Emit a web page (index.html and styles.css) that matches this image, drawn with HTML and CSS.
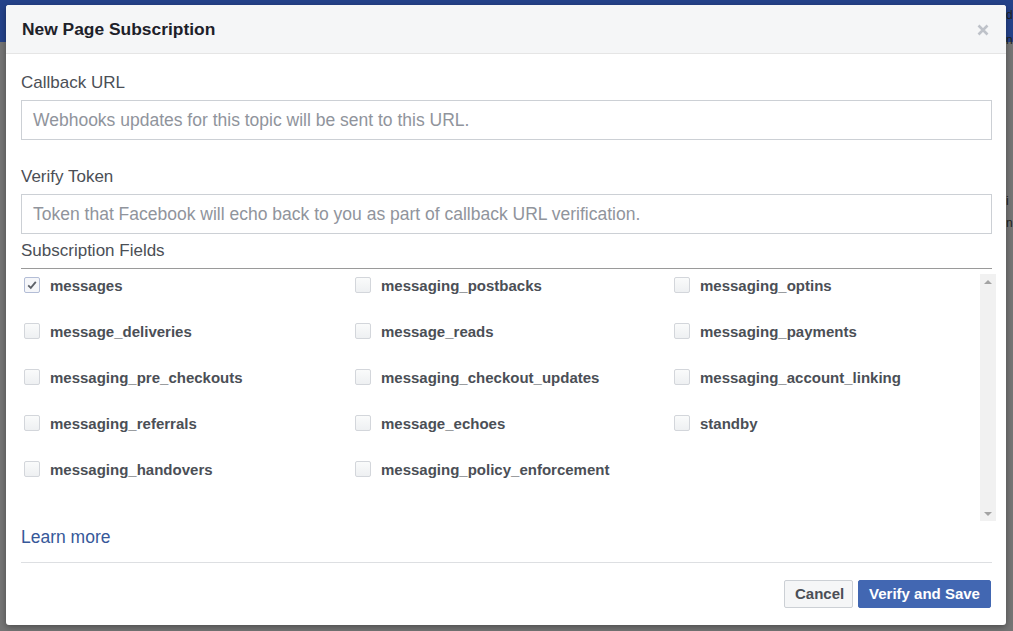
FILE: index.html
```html
<!DOCTYPE html>
<html>
<head>
<meta charset="utf-8">
<link rel="stylesheet" href="styles.css">
</head>
<body>
<div class="page">
  <div class="topbar"></div>
  <div class="behind">
    <p class="frag f1">d</p>
    <p class="frag f2">n</p>
    <p class="frag f3">i</p>
    <p class="frag f4">n</p>
  </div>
</div>
<div class="modal">
  <div class="modal-header">
    <h2 class="modal-title">New Page Subscription</h2>
    <svg class="close" width="12" height="12" viewBox="0 0 12 12"><path d="M1.5 1.5 L10.5 10.5 M10.5 1.5 L1.5 10.5" stroke="#bec2c9" stroke-width="2.6" stroke-linecap="butt"/></svg>
  </div>
  <div class="modal-body">
    <label class="field-label">Callback URL</label>
    <div class="input"><span class="placeholder">Webhooks updates for this topic will be sent to this URL.</span></div>
    <label class="field-label gap">Verify Token</label>
    <div class="input"><span class="placeholder">Token that Facebook will echo back to you as part of callback URL verification.</span></div>
    <div class="section-label">Subscription Fields</div>
    <div class="scroll-area">
      <div class="fields">
        <div class="field"><span class="cb checked"><svg width="12" height="12" viewBox="0 0 12 12"><path d="M2.2 6.4 L4.8 8.9 L9.8 2.9" fill="none" stroke="#5d6168" stroke-width="1.8"/></svg></span><span class="fname">messages</span></div>
        <div class="field"><span class="cb"></span><span class="fname">messaging_postbacks</span></div>
        <div class="field"><span class="cb"></span><span class="fname">messaging_optins</span></div>
        <div class="field"><span class="cb"></span><span class="fname">message_deliveries</span></div>
        <div class="field"><span class="cb"></span><span class="fname">message_reads</span></div>
        <div class="field"><span class="cb"></span><span class="fname">messaging_payments</span></div>
        <div class="field"><span class="cb"></span><span class="fname">messaging_pre_checkouts</span></div>
        <div class="field"><span class="cb"></span><span class="fname">messaging_checkout_updates</span></div>
        <div class="field"><span class="cb"></span><span class="fname">messaging_account_linking</span></div>
        <div class="field"><span class="cb"></span><span class="fname">messaging_referrals</span></div>
        <div class="field"><span class="cb"></span><span class="fname">message_echoes</span></div>
        <div class="field"><span class="cb"></span><span class="fname">standby</span></div>
        <div class="field"><span class="cb"></span><span class="fname">messaging_handovers</span></div>
        <div class="field"><span class="cb"></span><span class="fname">messaging_policy_enforcement</span></div>
      </div>
      <div class="scrollbar">
        <span class="arrow up"></span>
        <span class="arrow down"></span>
      </div>
    </div>
    <a class="learn" href="#">Learn more</a>
  </div>
  <div class="modal-footer">
    <button class="btn cancel">Cancel</button>
    <button class="btn primary">Verify and Save</button>
  </div>
</div>
</body>
</html>
```
FILE: styles.css
```css
html, body {
  margin: 0;
  padding: 0;
}
body {
  width: 1013px;
  height: 631px;
  overflow: hidden;
  background: #757575;
  font-family: "Liberation Sans", Arial, sans-serif;
  position: relative;
}
.page {
  height: 631px;
}
.topbar {
  height: 42px;
  background: #24428a;
}
.behind {
  position: relative;
}
.frag {
  position: absolute;
  margin: 0;
  left: 1006px;
  font-size: 12px;
  line-height: 14px;
  color: #222;
}
.f1 { top: -34px; }
.f2 { top: -9px; }
.f3 { top: 152px; }
.f4 { top: 174px; }

.modal {
  position: absolute;
  left: 6px;
  top: 5px;
  width: 1000px;
  height: 620px;
  background: #fff;
  border-radius: 3px;
  box-shadow: 0 2px 6px rgba(0,0,0,0.35);
  display: flex;
  flex-direction: column;
  overflow: hidden;
}
.modal-header {
  height: 48px;
  background: #f5f6f7;
  border-bottom: 1px solid #e5e5e5;
  display: flex;
  align-items: center;
  justify-content: space-between;
  padding: 0 16px 0 16px;
  flex-shrink: 0;
}
.modal-title {
  margin: 0;
  font-size: 17.4px;
  font-weight: bold;
  color: #1d2129;
  line-height: 22px;
}
.close {
  margin-right: 1px;
  margin-top: 2px;
}
.modal-body {
  padding: 18px 14px 0 15px;
  display: flex;
  flex-direction: column;
}
.field-label {
  font-size: 17px;
  line-height: 22px;
  color: #4b4f56;
  margin-bottom: 6px;
}
.field-label.gap {
  margin-top: 26px;
}
.input {
  height: 38px;
  border: 1px solid #ccd0d5;
  display: flex;
  align-items: center;
  padding: 0 11px;
}
.placeholder {
  font-size: 17.5px;
  color: #90949c;
  white-space: nowrap;
}
.section-label {
  font-size: 17px;
  line-height: 22px;
  color: #4b4f56;
  margin-top: 6px;
  padding-bottom: 6px;
  border-bottom: 1px solid #9a9a9a;
}
.scroll-area {
  margin-top: 5px;
  height: 247px;
  display: flex;
  margin-right: -4px;
}
.fields {
  flex: 1;
  display: grid;
  grid-template-columns: 331px 319px 1fr;
  grid-auto-rows: 22px;
  row-gap: 24px;
  padding-left: 3px;
  align-content: start;
}
.field {
  display: flex;
  align-items: center;
  gap: 10px;
}
.cb {
  width: 14px;
  height: 14px;
  border: 1px solid #d3d6db;
  border-radius: 2px;
  background: linear-gradient(#fafbfb, #eef0f2);
  display: flex;
  align-items: center;
  justify-content: center;
  flex-shrink: 0;
}
.cb.checked {
  border-color: #b3bdd6;
  background: #f5f6f9;
}
.fname {
  font-size: 15px;
  font-weight: bold;
  color: #4b4f56;
  white-space: nowrap;
}
.scrollbar {
  width: 16px;
  background: #f1f1f1;
  display: flex;
  flex-direction: column;
  justify-content: space-between;
  align-items: center;
  padding: 6px 0 5px;
}
.arrow {
  width: 0;
  height: 0;
  border-left: 4px solid transparent;
  border-right: 4px solid transparent;
}
.arrow.up {
  border-bottom: 4px solid #a3a3a3;
}
.arrow.down {
  border-top: 4px solid #a3a3a3;
}
.learn {
  margin-top: 5px;
  font-size: 17.5px;
  line-height: 22px;
  color: #365899;
  text-decoration: none;
  align-self: flex-start;
}
.modal-footer {
  margin: 14px 14px 0 15px;
  border-top: 1px solid #dddfe2;
  padding-top: 17px;
  display: flex;
  justify-content: flex-end;
  gap: 5px;
}
.btn {
  height: 28px;
  font-family: "Liberation Sans", Arial, sans-serif;
  font-size: 15px;
  font-weight: bold;
  border-radius: 2px;
  padding: 0 10px;
  line-height: 26px;
  cursor: pointer;
}
.btn.cancel {
  width: 69px;
  background: #f5f6f7;
  border: 1px solid #ccd0d5;
  color: #4b4f56;
}
.btn.primary {
  width: 133px;
  margin-right: 1px;
  background: #4267b2;
  border: 1px solid #4267b2;
  color: #fff;
}
```
